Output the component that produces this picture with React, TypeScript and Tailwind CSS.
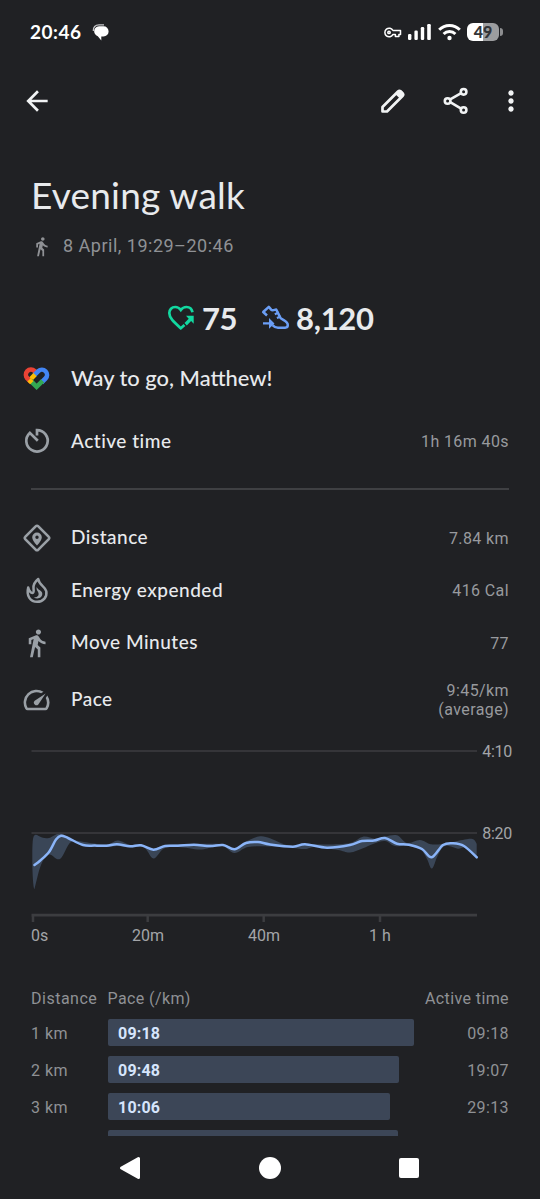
import type { ReactNode } from "react";
import { MdArrowBack, MdDirectionsWalk, MdMoreVert, MdSpeed } from "react-icons/md";

type Point = [number, number];

const splits = [
  { distance: "1 km", pace: "09:18", time: "09:18", width: 306.5 },
  { distance: "2 km", pace: "09:48", time: "19:07", width: 291 },
  { distance: "3 km", pace: "10:06", time: "29:13", width: 282 },
];

const paceLine: Point[] = [
  [34.5, 125], [40, 120.7], [49, 112], [56, 99.5], [61, 95.7], [68, 98], [83, 105], [95, 105.6], [106.7, 105.7],
  [117, 104.3], [130, 106.3], [141, 105.3], [153.5, 109.7], [165, 106], [178, 105.8], [194, 104.8], [210, 106],
  [223, 105], [234.5, 109.3], [246, 103], [258, 102], [270, 104.5], [293, 106.7], [305, 104.3], [327, 107.7],
  [350, 105], [362, 101], [374, 100.5], [385, 98], [397, 103.7], [409, 104.7], [422, 109], [431.7, 117.3],
  [443, 105], [453, 103.3], [464, 106], [476.7, 117.3],
];

const bandTop: Point[] = [
  [32.3, 111], [33, 99], [35.5, 94.8], [42, 97.5], [49, 98], [60, 93.5], [71, 99], [84, 102], [106, 104.5], [118, 100.5],
  [130, 105], [141, 104.5], [153.5, 109], [165, 105], [194, 104], [223, 104.3], [234.5, 108.5], [247, 101],
  [260, 96.3], [270, 98.3], [282, 103.5], [293, 106], [305, 103.7], [327, 104.5], [350, 103], [363, 96.7], [375, 98.7],
  [385, 96.5], [397, 95.3], [407, 103], [420, 100], [431, 104.3], [442, 104], [453, 102], [468, 99], [474, 99.8], [476.7, 104],
];

const bandBottom: Point[] = [
  [34.5, 149], [41, 125], [49, 114.5], [60, 119], [71, 102], [83, 106], [106, 107], [118, 106], [130, 107.5], [144, 107.5],
  [153.5, 118.5], [164, 108.5], [178, 107], [200, 109.5], [213, 107], [223, 106], [234.5, 113], [248, 107], [270, 106.5],
  [293, 108], [305, 109], [316, 107], [338, 110], [350, 112.5], [363, 108.3], [373, 104], [385, 101], [395, 106],
  [409, 106], [421, 110], [427, 119], [432, 128.5], [438, 115], [445, 106], [458, 108.7], [465, 108], [476.7, 118],
];

const ticks = [
  { x: 33, label: "0s", textX: 31, anchor: "start" as const },
  { x: 147.7, label: "20m", textX: 148, anchor: "middle" as const },
  { x: 263.7, label: "40m", textX: 264, anchor: "middle" as const },
  { x: 380, label: "1 h", textX: 380, anchor: "middle" as const },
];

// Catmull-Rom segments written as cubic beziers
function curve(points: Point[]) {
  return points
    .slice(0, -1)
    .map((p1, i) => {
      const p0 = points[i - 1] ?? p1;
      const p2 = points[i + 1];
      const p3 = points[i + 2] ?? p2;
      return `C${p1[0] + (p2[0] - p0[0]) / 6} ${p1[1] + (p2[1] - p0[1]) / 6} ${p2[0] - (p3[0] - p1[0]) / 6} ${p2[1] - (p3[1] - p1[1]) / 6} ${p2[0]} ${p2[1]}`;
    })
    .join("");
}

const linePath = `M${paceLine[0].join(" ")}${curve(paceLine)}`;
const reversedBottom = [...bandBottom].reverse();
const bandPath = `M${bandTop[0].join(" ")}${curve(bandTop)}L${reversedBottom[0].join(" ")}${curve(reversedBottom)}Q33 149 32.3 125Z`;

function StatusBar() {
  return (
    <div className="flex h-16 shrink-0 items-center pr-[37px] pl-[30px] text-white">
      <span className="font-['Lato',sans-serif] text-[19px] font-bold tracking-[0.5px]">20:46</span>
      <svg className="ml-[11px] h-[18px] w-[18px]" viewBox="0 0 18 18">
        <path d="M1.300 8C1 4.200 3.300 1.800 7 1.800h5" fill="none" stroke="#c4c5c7" strokeWidth="1.300" />
        <path d="M8.200 3.300h3.300a5.100 5.100 0 0 1 0 10.200H9.300v4L5.800 13.200A5.100 5.100 0 0 1 8.200 3.300Z" fill="currentColor" />
      </svg>
      <div className="flex-1" />
      <svg className="h-[11px] w-[18px]" viewBox="0 0 18 11" fill="none" stroke="currentColor" strokeWidth="1.500">
        <path d="M9 3.500A4.300 4.300 0 1 0 9 7.400h2.400v2.200h3.500V7.400h1.600V3.500Z" strokeLinejoin="round" />
        <circle cx="5" cy="5.400" r="1.200" />
      </svg>
      <svg className="ml-[6px] h-[18px] w-6" viewBox="0 0 24 18" fill="currentColor">
        <rect x="0" y="11" width="3.400" height="6" rx="1.200" />
        <rect x="6.400" y="7.500" width="3.400" height="9.500" rx="1.200" />
        <rect x="12.800" y="4" width="3.400" height="13" rx="1.200" />
        <rect x="19.200" y="1" width="3.600" height="16" rx="1.200" />
      </svg>
      <svg className="ml-[6px] h-[18px] w-[23px]" viewBox="0 0 23 18" fill="none" stroke="currentColor" strokeWidth="3">
        <path d="M1.200 6.700a14.500 14.500 0 0 1 20.600 0M5.600 11a8.400 8.400 0 0 1 11.800 0" />
        <circle cx="11.500" cy="15" r="2.200" fill="currentColor" stroke="none" />
      </svg>
      <div className="ml-[6px] flex h-[18px] w-8 items-center justify-center rounded-[6px] bg-linear-to-r from-white from-50% to-[#9c9d9f] to-50% font-['Lato',sans-serif] text-base leading-none font-black text-[#333437]">
        49
      </div>
      <div className="ml-[1px] h-2 w-[3px] rounded-r-sm bg-[#8d8e90]" />
    </div>
  );
}

function AppBar() {
  return (
    <div className="flex h-[73px] shrink-0 items-center pr-[13px] pl-[21px] text-[#f1f3f4]">
      <MdArrowBack className="h-8 w-8" />
      <div className="flex-1" />
      <svg className="h-[26px] w-[26px]" viewBox="0 0 26 26">
        <path d="M2.500 23.500V19L18 3.500a2 2 0 0 1 2.800 0l1.700 1.700a2 2 0 0 1 0 2.800L7 23.500Z" fill="none" stroke="currentColor" strokeWidth="2.700" strokeLinejoin="round" />
        <path d="m15.200 6 4.800 4.800 3.400-3.400V4.800l-2.200-2.200h-2.600Z" fill="currentColor" />
      </svg>
      <svg className="ml-[37px] h-[28px] w-[26px]" viewBox="0 0 26 28" fill="none" stroke="currentColor" strokeWidth="2.600">
        <path d="m7.200 12.400 10.500-6M7.200 15.200l10.500 6.100" />
        <circle cx="4.600" cy="14" r="2.800" />
        <circle cx="20.600" cy="4.800" r="2.800" />
        <circle cx="20.600" cy="23" r="2.800" />
      </svg>
      <MdMoreVert className="ml-[26px] h-8 w-8" />
    </div>
  );
}

function FitLogo() {
  return (
    <svg className="h-[30px] w-[30px]" viewBox="0 0 30 30" fill="none" strokeWidth="4.600">
      <path d="M5.500 14.400A5 5 0 0 1 12.500 7l2 2" stroke="#ea4335" />
      <path d="m19.500 18.500 4-4a5 5 0 0 0-7.200-7.300l-4 4" stroke="#4285f4" />
      <path d="m7.500 16.300 5.500-5.700" stroke="#fbbc04" />
      <path d="m8.300 16.500 6.300 6.300 6-6" stroke="#34a853" />
      <path d="m4.900 13.800 4.200 4.200" stroke="#ea4335" />
      <path d="m7 15.800 2.900 2.900" stroke="#fbbc04" />
    </svg>
  );
}

function TimerIcon() {
  return (
    <svg className="h-[30px] w-[30px]" viewBox="0 0 30 30" fill="none" stroke="currentColor" strokeWidth="2.700">
      <path d="M15 9.500V4.100A10.700 10.700 0 1 1 7.800 6.900l8 7.800" />
    </svg>
  );
}

function DistanceIcon() {
  return (
    <svg className="h-[30px] w-[30px]" viewBox="0 0 30 30">
      <path d="M13.900 3.200a1.500 1.500 0 0 1 2.200 0l10.700 10.700a1.500 1.500 0 0 1 0 2.200L16.100 26.800a1.500 1.500 0 0 1-2.200 0L3.200 16.100a1.500 1.500 0 0 1 0-2.200Z" fill="none" stroke="currentColor" strokeWidth="2.600" />
      <path fillRule="evenodd" d="M15 22.500c-3-3.300-4.800-5.700-4.800-8.200a4.800 4.800 0 0 1 9.600 0c0 2.500-1.800 4.900-4.800 8.200ZM15 12.500a1.700 1.700 0 1 0 0 3.400 1.700 1.700 0 0 0 0-3.400Z" fill="currentColor" />
    </svg>
  );
}

function FlameIcon() {
  return (
    <svg className="h-[30px] w-[30px]" viewBox="0 0 30 30">
      <path
        d="M6.200 12.500c-2.200 8.500 2.300 14.300 8.900 14.300 6.300 0 10.200-5 9.200-10.600-.9-4.700-7.300-6-8.100-12.200-3.200 2.600-5 5.700-4.700 9.200.2 2.600.6 4.100-.6 4.600-1.900.6-4-2-4.700-5.300Z"
        fill="none"
        stroke="currentColor"
        strokeWidth="2.500"
        strokeLinejoin="round"
      />
      <path d="M14.700 12c-.8 4.100 2.300 4.400 1.900 7.400-.3 2-2.400 3.200-4.700 2.800 2.900 2.500 8.400 1.100 8.400-3.400 0-3.600-4.400-3.400-5.600-6.800Z" fill="currentColor" />
    </svg>
  );
}

function Scores() {
  return (
    <div className="flex h-[62px] items-center pl-[166px] font-['Lato',sans-serif] text-[31px] leading-none font-bold text-[#e8eaed]">
      <svg className="h-[30px] w-[30px] text-[#12d8a0]" viewBox="0 0 30 30" fill="none">
        <path d="M26.500 9.300C25.800 5.900 23.300 4 20.500 4c-2.300 0-4.300 1-5.700 3C13.400 5 11.400 4 9.200 4 5.800 4 3.300 6.600 3.300 10c0 5 4.200 8.700 11.500 15.300l3.700-3.300" stroke="currentColor" strokeWidth="2.700" />
        <path d="M20 12.700h7.700v8l-2.600-2.600-4.300 4.300-2.300-2.300 4.200-4.300Z" fill="currentColor" />
      </svg>
      <span className="ml-[6px] w-[35px] tracking-[-0.4px]">75</span>
      <svg className="ml-[23px] h-[30px] w-[30px] text-[#6b9ef5]" viewBox="0 0 30 30" fill="none">
        <path d="M7 12.500 3.200 9l5.600-5.200 2.300 2.800c1.400 1.500 3 .3 5.100-.1l4.100 8.100c1.300 2.400 7.500 3.100 7.500 7.500 0 1.600-1 2.600-2.600 2.600H18c-2.500 0-4-1-5.500-2.600" stroke="currentColor" strokeWidth="2.500" strokeLinejoin="round" />
        <path d="m14.800 11.300 4-1.700m-1.900 5.500 4-1.700" stroke="currentColor" strokeWidth="2.200" />
        <path d="M3 19.200h6v-4.300l5.500 5.500-5.500 5.300v-4.200H3Z" fill="currentColor" />
      </svg>
      <span className="ml-[6px] tracking-[-0.3px]">8,120</span>
    </div>
  );
}

function Row({ icon, label, value, className }: { icon: ReactNode; label: string; value?: ReactNode; className: string }) {
  return (
    <div className={`flex items-center pr-[31px] pl-[21px] ${className}`}>
      <div className="flex w-[31px] justify-center text-[#9aa0a6]">{icon}</div>
      <span className="ml-[19px] flex-1 font-['Lato',sans-serif] text-[19px] font-medium tracking-[0.5px] text-[#e8eaed]">{label}</span>
      <span className="pt-px text-right text-base leading-[19px] tracking-[0.4px] text-[#989a9e]">{value}</span>
    </div>
  );
}

function PaceChart() {
  return (
    <svg className="block h-[220px] w-[540px] shrink-0" viewBox="0 0 540 220">
      <path d="M31.500 11H477M31.500 93H477" stroke="#3c3d40" strokeWidth="1.600" />
      <path d={bandPath} fill="#3a4657" />
      <path d={linePath} fill="none" stroke="#8ab4f8" strokeWidth="2.500" strokeLinecap="round" strokeLinejoin="round" />
      <path d="M31.500 175.200H477" stroke="#3c3d40" strokeWidth="2.800" />
      <g fill="#a3a5a8" fontSize="16">
        {ticks.map((tick) => (
          <g key={tick.label}>
            <path d={`M${tick.x} 176v6`} stroke="#3c3d40" strokeWidth="2.500" />
            <text x={tick.textX} y="201" textAnchor={tick.anchor}>{tick.label}</text>
          </g>
        ))}
        <text x="482.300" y="16.500" textLength="30">4:10</text>
        <text x="482.300" y="98.500" textLength="30">8:20</text>
      </g>
    </svg>
  );
}

function SplitsTable() {
  return (
    <div className="flex flex-col overflow-hidden pr-[31px] pl-[31px] text-base tracking-[0.5px] text-[#8f9195]">
      <div className="mt-[27px] flex h-6 items-center">
        <span className="w-[76.500px]">Distance</span>
        <span className="flex-1 tracking-[0.4px]">Pace (/km)</span>
        <span className="tracking-[0.4px]">Active time</span>
      </div>
      <div className="mt-2 flex flex-col gap-[10px]">
        {splits.map((split) => (
          <div key={split.distance} className="flex h-[27px] shrink-0 items-center">
            <span className="w-[76.500px] pt-[3px]">{split.distance}</span>
            <div className="flex-1">
              <div className="flex h-[27px] items-center rounded-[2px] bg-[#3c4657] pt-[3px] pl-[10.500px] font-bold tracking-[0.2px] text-[#d6e5fc]" style={{ width: split.width }}>
                {split.pace}
              </div>
            </div>
            <span className="pt-[3px] tracking-[0.4px]">{split.time}</span>
          </div>
        ))}
        <div className="ml-[76.500px] h-[27px] w-[290px] shrink-0 rounded-[2px] bg-[#3c4657]" />
      </div>
    </div>
  );
}

function NavBar() {
  return (
    <div className="flex h-[63px] shrink-0 items-center justify-center gap-[118px] pr-[2px] text-white">
      <svg className="h-6 w-[22px]" viewBox="0 0 22 24">
        <path d="M19.500 2.500v19L2.500 12Z" fill="currentColor" stroke="currentColor" strokeWidth="3" strokeLinejoin="round" />
      </svg>
      <div className="h-[22px] w-[22px] rounded-full bg-white" />
      <div className="h-5 w-5 rounded-[2px] bg-white" />
    </div>
  );
}

export default function App() {
  return (
    <div className="flex h-[1199px] w-[540px] flex-col overflow-hidden bg-[#202124] font-['Roboto',sans-serif]">
      <StatusBar />
      <AppBar />
      <main className="flex h-[999px] shrink-0 flex-col overflow-hidden">
        <h1 className="mt-[34px] shrink-0 pl-[31px] font-['Lato',sans-serif] text-[37px] leading-[48px] tracking-[0.2px] text-[#e8eaed]">Evening walk</h1>
        <div className="mt-4 flex h-[22px] shrink-0 items-center pl-[31px] text-lg tracking-[0.5px] text-[#8f9195]">
          <MdDirectionsWalk className="h-[21px] w-[21px]" />
          <span className="ml-[11px]">8 April, 19:29–20:46</span>
        </div>
        <div className="mt-[30px] h-[62px] shrink-0">
          <Scores />
        </div>
        <div className="mt-px flex h-[58px] shrink-0 items-center pl-[22px]">
          <FitLogo />
          <span className="ml-[19px] pb-0.5 font-['Lato',sans-serif] text-[21.900px] font-medium text-[#e8eaed]">Way to go, Matthew!</span>
        </div>
        <Row className="h-[66px] shrink-0" icon={<TimerIcon />} label="Active time" value="1h 16m 40s" />
        <div className="mx-[31px] mt-[14px] h-[1.500px] shrink-0 bg-[#3f4043]" />
        <div className="mt-[22px] shrink-0">
          <Row className="h-[52px]" icon={<DistanceIcon />} label="Distance" value="7.84 km" />
          <Row className="h-[53px]" icon={<FlameIcon />} label="Energy expended" value="416 Cal" />
          <Row className="h-[52px]" icon={<MdDirectionsWalk className="h-8 w-8" />} label="Move Minutes" value="77" />
          <Row className="h-[62px]" icon={<MdSpeed className="h-8 w-8" />} label="Pace" value={<>9:45/km<br />(average)</>} />
        </div>
        <div className="mt-[9px] shrink-0">
          <PaceChart />
        </div>
        <SplitsTable />
      </main>
      <NavBar />
    </div>
  );
}
